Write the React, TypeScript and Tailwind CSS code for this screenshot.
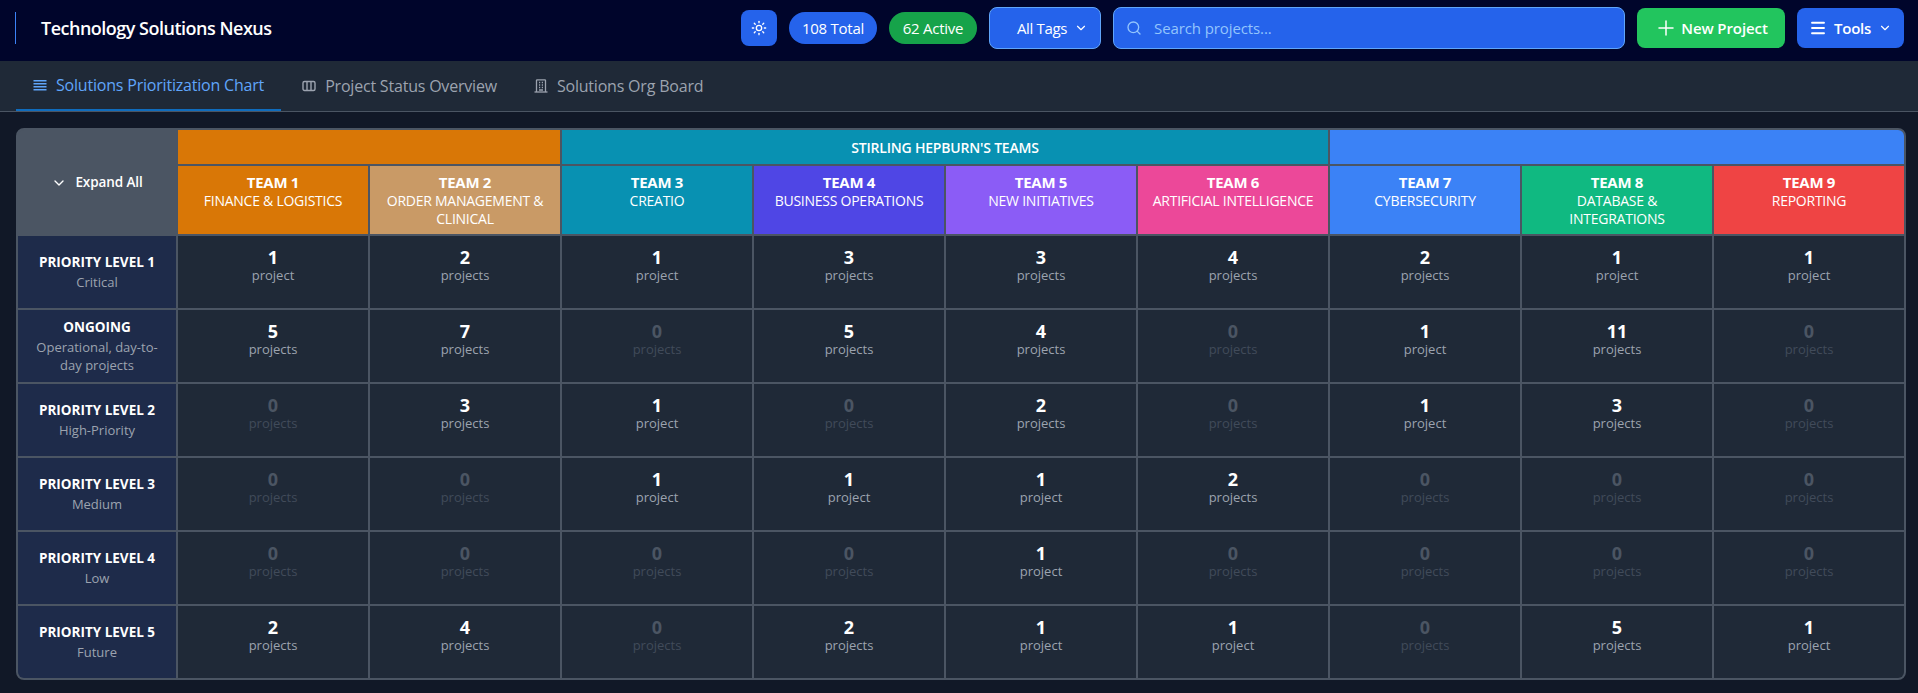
import { Sun, Search, ChevronDown, Plus, Menu } from "lucide-react";

const teams = [
  { n: "TEAM 1", d: "FINANCE & LOGISTICS", c: "bg-[#d97706]" },
  { n: "TEAM 2", d: "ORDER MANAGEMENT & CLINICAL", c: "bg-[#c99a66]" },
  { n: "TEAM 3", d: "CREATIO", c: "bg-[#0891b2]" },
  { n: "TEAM 4", d: "BUSINESS OPERATIONS", c: "bg-[#4f46e5]" },
  { n: "TEAM 5", d: "NEW INITIATIVES", c: "bg-[#8b5cf6]" },
  { n: "TEAM 6", d: "ARTIFICIAL INTELLIGENCE", c: "bg-[#ec4899]" },
  { n: "TEAM 7", d: "CYBERSECURITY", c: "bg-[#3b82f6]" },
  { n: "TEAM 8", d: "DATABASE & INTEGRATIONS", c: "bg-[#10b981]" },
  { n: "TEAM 9", d: "REPORTING", c: "bg-[#ef4444]" },
];

const rows = [
  { t: "PRIORITY LEVEL 1", s: "Critical", v: [1, 2, 1, 3, 3, 4, 2, 1, 1] },
  { t: "ONGOING", s: "Operational, day-to-day projects", v: [5, 7, 0, 5, 4, 0, 1, 11, 0] },
  { t: "PRIORITY LEVEL 2", s: "High-Priority", v: [0, 3, 1, 0, 2, 0, 1, 3, 0] },
  { t: "PRIORITY LEVEL 3", s: "Medium", v: [0, 0, 1, 1, 1, 2, 0, 0, 0] },
  { t: "PRIORITY LEVEL 4", s: "Low", v: [0, 0, 0, 0, 1, 0, 0, 0, 0] },
  { t: "PRIORITY LEVEL 5", s: "Future", v: [2, 4, 0, 2, 1, 1, 0, 5, 1] },
];

function RowsIcon() {
  return (
    <svg width="14" height="14" viewBox="0 0 14 14" fill="none" stroke="currentColor" strokeWidth="1.5">
      <path d="M0.5 2.75h13M0.5 5.75h13M0.5 8.75h13M0.5 11.75h13" />
    </svg>
  );
}

function ColumnsIcon() {
  return (
    <svg width="14" height="14" viewBox="0 0 14 14" fill="none" stroke="currentColor" strokeWidth="1.4">
      <rect x="1" y="2.5" width="12" height="9" rx="1.5" />
      <path d="M5 2.5v9M9 2.5v9" />
    </svg>
  );
}

function BuildingIcon() {
  return (
    <svg width="14" height="14" viewBox="0 0 14 14" fill="none" stroke="currentColor" strokeWidth="1.3">
      <path d="M2.5 13V1.5a.7.7 0 0 1 .7-.7h7.6a.7.7 0 0 1 .7.7V13" />
      <path d="M0.5 13h13" />
      <path d="M5 3.5h1.2M7.8 3.5H9M5 6h1.2M7.8 6H9M5 8.5h1.2M7.8 8.5H9M5 11h4" />
    </svg>
  );
}

export default function App() {
  return (
    <div className="h-[693px] w-[1918px] overflow-hidden bg-[#111827] font-['Open_Sans','Noto_Sans',sans-serif] text-white">
      <header className="flex h-[61px] items-center bg-[#00052b] pb-[5px] pl-[15px] pr-[14px]">
        <div className="h-[32px] w-px bg-[#3b82f6]" />
        <h1 className="ml-[25px] text-[18px] font-semibold tracking-[-0.5px]">Technology Solutions Nexus</h1>
        <div className="ml-auto flex items-center gap-[12px]">
          <button className="flex h-[36px] w-[36px] items-center justify-center rounded-lg bg-[#2563eb]">
            <Sun size={16} />
          </button>
          <span className="flex h-[32px] w-[88px] items-center justify-center rounded-full bg-[#2563eb] text-[15px] tracking-[-0.25px]">108 Total</span>
          <span className="flex h-[32px] w-[88px] items-center justify-center rounded-full bg-[#16a34a] text-[15px] tracking-[-0.25px]">62 Active</span>
          <button className="flex h-[42px] w-[112px] items-center justify-end gap-[7px] rounded-lg border border-[#60a5fa] bg-[#2563eb] pr-[12px] text-[15px] tracking-[-0.35px]">
            All Tags <ChevronDown size={14} />
          </button>
          <div className="flex h-[42px] w-[512px] items-center gap-[12px] rounded-lg border border-[#60a5fa] bg-[#2563eb] pl-[12px] text-[15px] tracking-[-0.1px] text-[#93c5fd]">
            <Search size={16} />
            <span>Search projects...</span>
          </div>
          <button className="flex h-[40px] w-[148px] items-center justify-center gap-[3px] rounded-lg bg-[#22c55e] text-[15px] font-semibold tracking-[-0.1px]">
            <Plus size={24} strokeWidth={1.5} /> New Project
          </button>
          <button className="flex h-[40px] w-[107px] items-center justify-center gap-[7px] rounded-lg bg-[#2563eb] text-[15px] font-semibold tracking-[-0.3px]">
            <Menu size={18} strokeWidth={2.5} /> Tools <ChevronDown size={14} />
          </button>
        </div>
      </header>

      <nav className="flex h-[51px] gap-[5px] border-b border-[#4b5563] bg-[#1f2937] pl-[16px] text-[16px] font-medium tracking-[-0.2px]">
        <div className="flex h-[50px] items-center gap-[9px] border-b-2 border-[#0f6cbd] px-[17px] text-[#60a5fa]">
          <RowsIcon /> Solutions Prioritization Chart
        </div>
        <div className="flex items-center gap-[9px] px-[16px] pb-[1px] text-[#9ca3af]">
          <ColumnsIcon /> Project Status Overview
        </div>
        <div className="flex items-center gap-[9px] px-[16px] pb-[1px] text-[#9ca3af]">
          <BuildingIcon /> Solutions Org Board
        </div>
      </nav>

      <main className="pl-[16px] pr-[12px] pt-[16px]">
        <div className="grid grid-cols-[158px_repeat(9,190px)] grid-rows-[34px_68px_repeat(6,72px)] gap-[2px] overflow-hidden rounded-lg border-2 border-[#4b5563] bg-[#4b5563]">
          <div className="row-span-2 flex items-center justify-center gap-[8px] bg-[#4b5563] pt-[1px] text-[13.5px] font-semibold tracking-[-0.1px]">
            <ChevronDown size={16} /> Expand All
          </div>
          <div className="col-span-2 bg-[#d97706]" />
          <div className="col-span-4 flex items-center justify-center bg-[#0891b2] text-[14px] font-semibold tracking-[-0.2px]">STIRLING HEPBURN'S TEAMS</div>
          <div className="col-span-3 bg-[#3b82f6]" />
          {teams.map((t) => (
            <div key={t.n} className={`${t.c} px-[12px] pt-[8px] text-center text-[14px] leading-[18px] tracking-[-0.25px]`}>
              <div className="-mt-[1px] mb-[1px] text-[15px] font-bold tracking-[-0.3px]">{t.n}</div>
              <div>{t.d}</div>
            </div>
          ))}
          {rows.map((r) => (
            <div key={r.t} className="contents">
              <div className="flex flex-col items-center justify-center bg-[#1e2b4a] px-[12px] pb-[1px] text-center">
                <div className="mb-[1px] text-[13.5px] font-bold leading-[20px]">{r.t}</div>
                <div className="text-[13px] font-medium leading-[18px] text-[#9ca3af]">{r.s}</div>
              </div>
              {r.v.map((v, i) => (
                <div key={i} className={`bg-[#1f2937] pt-[11px] text-center ${v === 0 ? "text-[#4b5563]" : ""}`}>
                  <div className="text-[18px] font-bold leading-[20px]">{v}</div>
                  <div className={`text-[13px] leading-[16px] ${v === 0 ? "text-[#414b5a]" : "text-[#9ca3af]"}`}>{v === 1 ? "project" : "projects"}</div>
                </div>
              ))}
            </div>
          ))}
        </div>
      </main>
    </div>
  );
}
